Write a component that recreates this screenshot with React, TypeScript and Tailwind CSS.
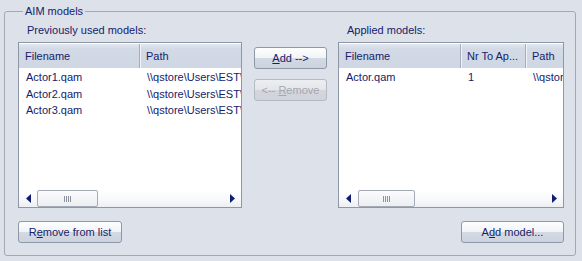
import React from "react";

const btn =
  "h-[22px] rounded-[3px] border border-[#8f98a7] bg-[linear-gradient(#fefefe_0%,#f1f3f6_50%,#d4dae4_50%,#ccd3df_100%)] text-[#14226a] flex items-center justify-center";
const btnDisabled =
  "h-[22px] rounded-[3px] border border-[#b4b9c2] bg-[linear-gradient(#eceef1_0%,#e3e6ea_50%,#d3d7dd_50%,#cfd3da_100%)] text-[#a3a7ae] flex items-center justify-center";

function Arrow({ dir }: { dir: "left" | "right" }) {
  return (
    <svg width="5" height="9" viewBox="0 0 5 9">
      {dir === "left" ? (
        <path d="M5 0 L0 4.5 L5 9 Z" fill="#0f1e6e" />
      ) : (
        <path d="M0 0 L5 4.5 L0 9 Z" fill="#0f1e6e" />
      )}
    </svg>
  );
}

function HScroll({ thumbLeft, thumbWidth }: { thumbLeft: number; thumbWidth: number }) {
  return (
    <div className="relative h-[17px] bg-[linear-gradient(#ffffff_0%,#f7f8fa_60%,#eceef2_100%)] flex items-center">
      <div className="w-[18px] flex justify-center">
        <Arrow dir="left" />
      </div>
      <div className="flex-1 relative h-full">
        <div
          className="absolute top-0 h-[17px] rounded-[2px] border border-[#a4abb6] bg-[linear-gradient(#fbfbfc,#eceef2)] flex items-center justify-center gap-[1px]"
          style={{ left: thumbLeft, width: thumbWidth }}
        >
          <span className="w-[1px] h-[6px] bg-[#8d939d]" />
          <span className="w-[1px] h-[6px] bg-[#8d939d]" />
          <span className="w-[1px] h-[6px] bg-[#8d939d]" />
          <span className="w-[1px] h-[6px] bg-[#8d939d]" />
        </div>
      </div>
      <div className="w-[18px] flex justify-center">
        <Arrow dir="right" />
      </div>
    </div>
  );
}

type Col = { title: string; width: number };

function ListView({
  cols,
  rows,
  thumbLeft,
  thumbWidth,
}: {
  cols: Col[];
  rows: string[][];
  thumbLeft: number;
  thumbWidth: number;
}) {
  return (
    <div className="h-[166px] border border-[#8d97a6] bg-white flex flex-col overflow-hidden">
      {/* Header */}
      <div className="h-[25px] flex bg-[linear-gradient(#e3e8f0_0%,#d3dae6_20%,#cfd7e4_100%)] border-t border-t-white">
        {cols.map((c) => (
          <div
            key={c.title}
            className="shrink-0 h-full flex items-center pl-[6px] border-r border-r-[#a3adbd] shadow-[1px_0_0_#f2f4f8] whitespace-nowrap overflow-hidden"
            style={{ width: c.width }}
          >
            {c.title}
          </div>
        ))}
      </div>
      {/* Rows */}
      <div className="flex-1 pt-[1px]">
        {rows.map((r, i) => (
          <div key={i} className="h-[16.7px] flex items-center">
            {r.map((cell, j) => (
              <div
                key={j}
                className="shrink-0 pl-[7px] whitespace-nowrap overflow-hidden"
                style={{ width: cols[j].width }}
              >
                {cell}
              </div>
            ))}
          </div>
        ))}
      </div>
      <HScroll thumbLeft={thumbLeft} thumbWidth={thumbWidth} />
    </div>
  );
}

export default function App() {
  return (
    <div className="w-[582px] h-[261px] bg-[#dde1ea] pt-[5px] pl-[4px] pr-[6px] font-['Liberation_Sans',Arial,sans-serif] text-[11px] leading-[13px] text-[#14226a]">
      <fieldset className="h-[251px] border border-[#a2a9b5] rounded-[3px] pl-[13px] pr-[11px]">
        <legend className="ml-[5px] px-[2px] leading-[13px]">AIM models</legend>
        <div className="flex">
          {/* Left column */}
          <div className="w-[224px] flex flex-col">
            <div className="h-[24px] pt-[6px] pl-[9px]">Previously used models:</div>
            <ListView
              cols={[
                { title: "Filename", width: 121 },
                { title: "Path", width: 200 },
              ]}
              rows={[
                ["Actor1.qam", "\\\\qstore\\Users\\EST\\Actor1.qam"],
                ["Actor2.qam", "\\\\qstore\\Users\\EST\\Actor2.qam"],
                ["Actor3.qam", "\\\\qstore\\Users\\EST\\Actor3.qam"],
              ]}
              thumbLeft={0}
              thumbWidth={61}
            />
            <div className="mt-[13px]">
              <button className={`${btn} w-[104px]`}>
                <span>
                  R<span className="underline">e</span>move from list
                </span>
              </button>
            </div>
          </div>

          {/* Middle buttons */}
          <div className="w-[73px] ml-[12px] pt-[29px] flex flex-col gap-[10px]">
            <button className={btn}>
              <span>
                <span className="underline">A</span>dd --&gt;
              </span>
            </button>
            <button className={btnDisabled} disabled>
              <span>
                &lt;-- <span className="underline">R</span>emove
              </span>
            </button>
          </div>

          {/* Right column */}
          <div className="w-[226px] ml-[11px] flex flex-col">
            <div className="h-[24px] pt-[6px] pl-[9px]">Applied models:</div>
            <ListView
              cols={[
                { title: "Filename", width: 122 },
                { title: "Nr To Ap...", width: 65 },
                { title: "Path", width: 120 },
              ]}
              rows={[["Actor.qam", "1", "\\\\qstore\\Users\\EST\\Actor.qam"]]}
              thumbLeft={1}
              thumbWidth={57}
            />
            <div className="mt-[13px] flex justify-end">
              <button className={`${btn} w-[103px]`}>
                <span>
                  A<span className="underline">d</span>d model...
                </span>
              </button>
            </div>
          </div>
        </div>
      </fieldset>
    </div>
  );
}
